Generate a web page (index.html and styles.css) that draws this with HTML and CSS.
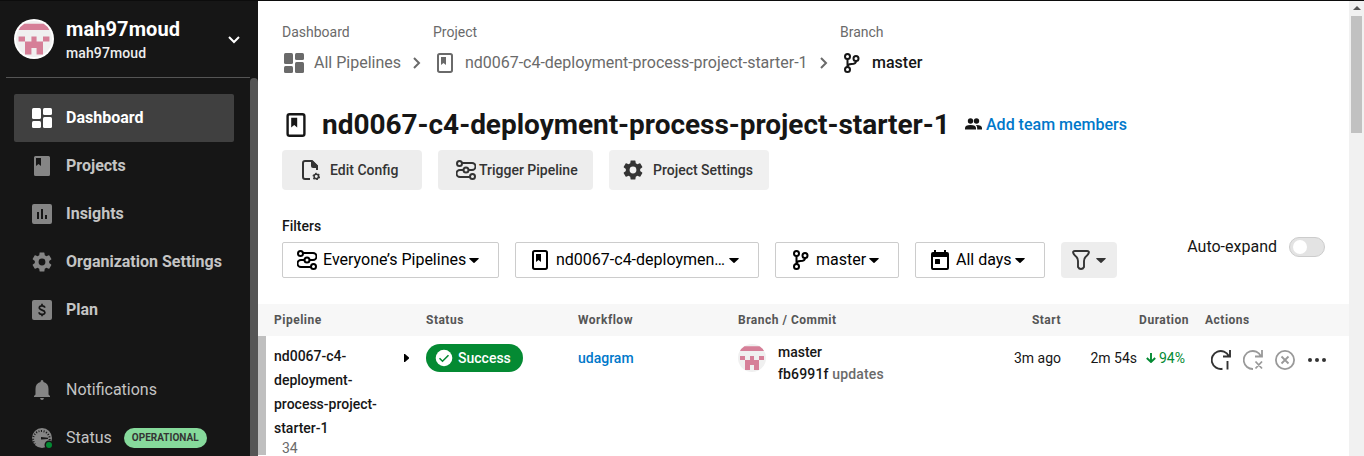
FILE: index.html
```html
<!DOCTYPE html>
<html lang="en">
<head>
<meta charset="utf-8">
<title>Pipelines</title>
<link rel="stylesheet" href="styles.css">
</head>
<body>
<svg class="sprite" aria-hidden="true">
  <symbol id="dash" viewBox="0 0 20 20"><rect width="9" height="11" rx="1.5"/><rect y="13" width="9" height="7" rx="1.5"/><rect x="11" width="9" height="7" rx="1.5"/><rect x="11" y="9" width="9" height="11" rx="1.5"/></symbol>
  <symbol id="book" viewBox="0 0 16 20"><rect x="1" y="1" width="14" height="18" rx="1.7" fill="none" stroke="currentColor" stroke-width="2"/><path d="M4 4h5v8l-2.500-2L4 12z"/></symbol>
  <symbol id="gear" viewBox="2 2 20 20"><path d="M19.140 12.940c.04-.3.060-.61.060-.94s-.02-.64-.07-.94l2.030-1.580a.49.490 0 0 0 .12-.61l-1.920-3.320a.488.488 0 0 0-.59-.22l-2.390.96c-.5-.38-1.030-.7-1.620-.94l-.36-2.540a.484.484 0 0 0-.48-.41h-3.840c-.24 0-.43.170-.47.410l-.36 2.540c-.59.240-1.130.57-1.620.94l-2.390-.96c-.22-.08-.47 0-.59.220L2.740 8.870c-.12.210-.08.470.12.610l2.030 1.580c-.05.300-.09.630-.09.940s.02.640.07.940l-2.030 1.580a.49.490 0 0 0-.12.610l1.920 3.320c.12.220.37.290.59.220l2.390-.96c.5.380 1.030.7 1.620.94l.36 2.540c.05.240.24.410.48.410h3.840c.24 0 .44-.17.470-.41l.36-2.540c.59-.24 1.130-.56 1.620-.94l2.390.96c.22.080.47 0 .59-.22l1.920-3.320c.12-.22.070-.47-.12-.61l-2.010-1.580zM12 15.400A3.400 3.400 0 1 1 12 8.600a3.400 3.400 0 0 1 0 6.800z"/></symbol>
  <symbol id="branch" viewBox="0 0 16 20"><g fill="none" stroke="currentColor" stroke-width="2"><circle cx="3.500" cy="3.500" r="2.500"/><circle cx="3.500" cy="16.500" r="2.500"/><circle cx="12" cy="5.500" r="2.500"/><path d="M3.500 6v8M12 8c0 2.500-2 3-4.500 3S3.500 12 3.500 14"/></g></symbol>
  <symbol id="pipe" viewBox="0 0 20 20"><g fill="none" stroke="currentColor" stroke-width="2"><circle cx="3.500" cy="3.500" r="2.500"/><circle cx="10" cy="10" r="2.500"/><circle cx="16.500" cy="16.500" r="2.500"/><path d="M6 3h10a3.500 3.500 0 0 1 0 7h-3.500M7.500 10H4a3.500 3.500 0 0 0 0 7h10"/></g></symbol>
  <symbol id="caret" viewBox="0 0 10 5"><path d="M.5 0h9Q10 .4 9.500 1L5.500 4.800Q5 5.200 4.500 4.800L.5 1Q0 .4.500 0z"/></symbol>
  <symbol id="chev" viewBox="0 0 8 12"><path d="M1 1l5 5-5 5" fill="none" stroke="currentColor" stroke-width="2"/></symbol>
  <symbol id="avatar" viewBox="0 0 28 28"><circle cx="14" cy="14" r="14" fill="#f0f0f0"/><path fill="#d67f98" d="M6.500 2.200h15Q25 4.500 26 7H2q1-2.500 4.500-4.800zM2 12h5v4H2zm19 0h5v4h-5zm-9 0h4v4h5v10h-5v-5h-4v5H7V16h5z"/></symbol>
</svg>
<div class="app">
  <aside class="side">
    <header class="org">
      <span class="face"><svg><use href="#avatar"/></svg></span>
      <div class="names"><b>mah97moud</b><span>mah97moud</span></div>
      <svg class="down" viewBox="0 0 12 8"><path d="M1 1l5 5 5-5" fill="none" stroke="#fff" stroke-width="2"/></svg>
    </header>
    <div class="navwrap">
      <nav class="nav">
        <a class="item active"><svg class="i20"><use href="#dash"/></svg><span class="label">Dashboard</span></a>
        <a class="item"><svg class="i20" viewBox="0 0 20 20"><path fill-rule="evenodd" d="M3.500 0h13Q18 0 18 1.500v17q0 1.500-1.500 1.500h-13Q2 20 2 18.500v-17Q2 0 3.500 0zM4 2v8l2.500-2L9 10V2z"/></svg><span class="label">Projects</span></a>
        <a class="item"><svg class="i20" viewBox="0 0 20 20"><path fill-rule="evenodd" d="M2 0h16q2 0 2 2v16q0 2-2 2H2q-2 0-2-2V2q0-2 2-2zM5 8v7h2V8zm4-3v10h2V5zm4 6v4h2v-4z"/></svg><span class="label">Insights</span></a>
        <a class="item"><svg class="i20"><use href="#gear"/></svg><span class="label">Organization Settings</span></a>
        <a class="item"><svg class="i20" viewBox="0 0 20 20"><rect width="20" height="20" rx="2"/><path d="M12.700 7.800C12.700 5.200 7.300 5.200 7.300 7.700c0 2.800 5.600 2 5.600 4.700s-5.800 2.600-5.800-.2M10 3.800v2.200m0 8v2.200" stroke="#161616" stroke-width="1.700" fill="none"/></svg><span class="label">Plan</span></a>
      </nav>
      <nav class="nav low">
        <a class="item light"><svg class="i20" viewBox="0 0 20 20"><path d="M10 0q1.500 0 1.500 2C15 3 16.500 5.500 16.500 9v5.500L18 16v1H2v-1l1.500-1.500V9C3.500 5.500 5 3 8.500 2Q8.500 0 10 0zM8 18h4q-.3 2-2 2t-2-2z"/></svg><span class="label">Notifications</span></a>
        <a class="item light"><svg class="i20" viewBox="0 0 20 20"><circle cx="10" cy="10" r="10"/><path d="M3 16.500A8.300 8.300 0 1 1 17.500 13" fill="none" stroke="#161616" stroke-width="2" stroke-dasharray="1 1.600"/><path d="M9 9l7 .7v1.300L9 11.500z" fill="#161616"/><circle cx="17" cy="17" r="4.500" fill="#161616"/><circle cx="17" cy="17" r="3" fill="#048a33"/></svg><span class="label">Status</span><span class="pill">OPERATIONAL</span></a>
      </nav>
      <div class="track"></div>
    </div>
  </aside>
  <main class="main">
    <div class="crumbs">
      <div class="crumb c1"><small>Dashboard</small><div class="line"><svg class="i20"><use href="#dash"/></svg><span>All Pipelines</span><svg class="chev"><use href="#chev"/></svg></div></div>
      <div class="crumb c2"><small>Project</small><div class="line"><svg class="book"><use href="#book"/></svg><span>nd0067-c4-deployment-process-project-starter-1</span><svg class="chev"><use href="#chev"/></svg></div></div>
      <div class="crumb c3"><small>Branch</small><div class="line"><svg class="book"><use href="#branch"/></svg><span>master</span></div></div>
    </div>
    <div class="title"><svg class="bigbook"><use href="#book"/></svg><h1>nd0067-c4-deployment-process-project-starter-1</h1>
      <a class="team"><svg viewBox="0 0 17 12"><circle cx="5.500" cy="3" r="2.700"/><circle cx="11.500" cy="3" r="2.700"/><path d="M0 11.500V10q0-3 5.500-3T11 10v1.500zM12.200 11.500V10q0-1.700-1.400-2.900Q17 7 17 10v1.500z"/></svg><span>Add team members</span></a></div>
    <div class="buttons">
      <button class="btn b1"><svg class="i20" viewBox="0 0 20 20"><path d="M10 19H5q-2 0-2-2V3q0-2 2-2h7l5 5v4" fill="none" stroke="currentColor" stroke-width="2"/><path d="M11 1h2l5 5v2h-5q-2 0-2-2z"/><circle cx="16.300" cy="16.500" r="2.200" fill="none" stroke="currentColor" stroke-width="1.500"/><circle cx="16.300" cy="16.500" r="3.200" fill="none" stroke="currentColor" stroke-width="1.200" stroke-dasharray="1.650 1.700"/></svg><span>Edit Config</span></button>
      <button class="btn b2"><svg class="i20"><use href="#pipe"/></svg><span>Trigger Pipeline</span></button>
      <button class="btn b3"><svg class="i20"><use href="#gear"/></svg><span>Project Settings</span></button>
    </div>
    <div class="filterbar">
      <div class="filters"><label>Filters</label>
        <div class="selects">
          <div class="sel s1"><svg class="i20"><use href="#pipe"/></svg><span>Everyone’s Pipelines</span><svg class="caret"><use href="#caret"/></svg></div>
          <div class="sel s2"><svg class="book"><use href="#book"/></svg><span>nd0067-c4-deploymen…</span><svg class="caret"><use href="#caret"/></svg></div>
          <div class="sel s3"><svg class="book"><use href="#branch"/></svg><span>master</span><svg class="caret"><use href="#caret"/></svg></div>
          <div class="sel s4"><svg class="cal" viewBox="0 0 18 20"><path fill-rule="evenodd" d="M3 0h2v2h8V0h2v2h1q2 0 2 2v14q0 2-2 2H2q-2 0-2-2V4q0-2 2-2h1zM2 7v11h14V7z"/><rect x="4" y="9" width="5" height="5" rx=".6"/></svg><span>All days</span><svg class="caret"><use href="#caret"/></svg></div>
          <div class="sel funnel"><svg class="fun" viewBox="0 0 18 20"><path d="M3 1h12q2.500 0 1.700 2.200Q16 5 13.500 7 12 8.500 12 11v6q-1 2-3 2t-3-2v-6q0-2.500-1.500-4Q2 5 1.300 3.200.500 1 3 1z" fill="none" stroke="currentColor" stroke-width="1.900"/></svg><svg class="caret"><use href="#caret"/></svg></div>
        </div>
      </div>
      <div class="auto"><span>Auto-expand</span><i class="toggle"></i></div>
    </div>
    <div class="row head"><span>Pipeline</span><span>Status</span><span>Workflow</span><span>Branch / Commit</span><span class="r">Start</span><span class="r">Duration</span><span class="act">Actions</span></div>
    <div class="row data">
      <div class="pipeline"><b>nd0067-c4-<br>deployment-<br>process-project-<br>starter-1</b><span>34</span><svg class="tri" viewBox="0 0 5 8"><path d="M0 0h1l4 3.500v1L1 8H0z"/></svg></div>
      <div><span class="success"><svg viewBox="0 0 16 16"><circle cx="8" cy="8" r="8.300" fill="#fff"/><path d="M3.500 8.200l3 3 6-6" fill="none" stroke="#048a33" stroke-width="1.600"/></svg>Success</span></div>
      <div class="work">udagram</div>
      <div class="commit"><svg><use href="#avatar"/></svg><div><b>master</b><p><b>fb6991f</b> updates</p></div></div>
      <div class="r cell">3m ago</div>
      <div class="dur cell"><span>2m 54s</span><svg viewBox="0 0 10 10"><path d="M5 0v9M.8 5L5 9l4.200-4" fill="none" stroke="#048a33" stroke-width="1.900"/></svg><em>94%</em></div>
      <div class="act icons">
        <svg class="i20 outline" viewBox="0 0 20 20"><path d="M11.500 18.800A9 9 0 1 1 17.800 6M19 0v6.500h-7M16.500 11v8.500"/></svg>
        <svg class="i20 outline muted" viewBox="0 0 20 20"><path d="M10 19A9 9 0 1 1 17.800 6M19 0v6.500h-7M12.500 11.500l6.500 7m0-7l-6.500 7"/></svg>
        <svg class="i20 outline muted" viewBox="0 0 20 20"><circle cx="10" cy="10" r="9.100"/><path d="M6.500 6.500l7 7m0-7l-7 7"/></svg>
        <svg class="dots" viewBox="0 0 18 4"><circle cx="2" cy="2" r="2"/><circle cx="9" cy="2" r="2"/><circle cx="16" cy="2" r="2"/></svg>
      </div>
    </div>
  </main>
  <div class="scroll"><svg viewBox="0 0 8 4"><path d="M0 4l4-4 4 4z"/></svg><div class="thumb"></div></div>
</div>
</body>
</html>
```
FILE: styles.css
```css
* { box-sizing: border-box; }
body { margin: 0; font-family: Roboto, sans-serif; color: #161616; background: #fff; overflow: hidden; }
svg { display: block; flex: none; fill: currentColor; }
b { font-weight: 500; }
p { margin: 0; }
.sprite { width: 0; height: 0; display: none; }
.i20 { width: 20px; height: 20px; }
.book { width: 16px; height: 20px; }
.app { display: flex; width: 1364px; height: 456px; border-top: 1px solid #0c0c0c; overflow: hidden; }

.side { width: 258px; height: 455px; background: #161616; flex: none; overflow: hidden; }
.org { height: 77px; margin: 0 8px 0 6px; padding-left: 8px; border-bottom: 1px solid #555; display: flex; align-items: center; }
.face { width: 40px; height: 40px; border-radius: 50%; background: #fff; padding: 2px; }
.face svg { width: 36px; height: 36px; }
.names { margin-left: 12px; padding-top: 4px; width: 162px; color: #fff; display: flex; flex-direction: column; }
.names b { font-size: 20px; line-height: 24px; font-weight: 700; letter-spacing: .1px; }
.names span { font-size: 14px; line-height: 24px; font-weight: 500; color: #eee; letter-spacing: .1px; }
.down { width: 12px; height: 8px; margin-top: 2px; }
.navwrap { display: grid; grid-template-columns: 250px 8px; grid-template-rows: 288px 90px; }
.nav { padding: 16px 16px 0 14px; }
.low { grid-row: 2; grid-column: 1; padding-top: 0; }
.track { grid-column: 2; grid-row: 1 / 3; background: #555; border-radius: 4px 4px 0 0; }
.item { height: 48px; padding-left: 18px; display: flex; align-items: center; gap: 14px; font-size: 16px; font-weight: 700; color: #c4c4c4; border-radius: 2px; white-space: nowrap; }
.item > svg { color: #858585; }
.label { padding-bottom: 2px; }
.active, .active > svg { color: #fff; }
.active { background: #404040; }
.light { font-weight: 400; }
.pill { background: #86d99b; color: #343434; font-size: 10px; font-weight: 700; line-height: 20px; height: 20px; width: 83px; text-align: center; border-radius: 10px; margin-left: -2px; }

.main { width: 1091px; flex: none; }
.crumbs { display: flex; padding: 22px 0 0 24px; color: #6a6a6a; }
.crumb small { display: block; font-size: 14px; line-height: 18px; }
.line { display: flex; align-items: center; height: 24px; margin-top: 10px; font-size: 16px; white-space: nowrap; }
.line > svg:first-child { margin-left: 2px; }
.line span { margin-left: 10px; padding-bottom: 2px; }
.c1 { width: 151px; }
.c2 { width: 407px; }
.c2 .line > svg:first-child, .c3 .line > svg:first-child { margin-left: 4px; }
.c2 .line span { margin-left: 12px; letter-spacing: -.02px; }
.c3 .line span { margin-left: 12px; font-weight: 500; }
.c3 .line { color: #161616; }
.chev { width: 8px; height: 12px; margin-left: 12px; }
.title { display: flex; align-items: center; height: 36px; margin-top: 32px; padding-left: 28px; }
.bigbook { width: 20px; height: 24px; }
.title h1 { margin: 0 0 0 16px; width: 643px; font-size: 28px; line-height: 36px; font-weight: 700; letter-spacing: -.03px; white-space: nowrap; }
.team { display: flex; align-items: center; gap: 4px; font-weight: 500; font-size: 16px; padding-bottom: 2px; }
.team span { color: #0078ca; }
.team svg { width: 17px; height: 12px; }
.buttons { display: flex; gap: 16px; padding: 7px 0 0 24px; }
.btn { font: 500 14px Roboto, sans-serif; color: #343434; border: 0; background: #ededed; border-radius: 4px; height: 40px; padding: 0; display: flex; align-items: center; white-space: nowrap; }
.b1 { width: 140px; padding-left: 18px; gap: 10px; }
.b2 { width: 155px; padding-left: 18px; gap: 3px; }
.b3 { width: 160px; padding-left: 14px; gap: 10px; background: #f0f0f0; }
.filterbar { display: flex; justify-content: space-between; padding: 26px 24px 0; height: 114px; }
.filters label { display: block; font-size: 14px; line-height: 20px; font-weight: 500; }
.selects { display: flex; gap: 16px; margin-top: 6px; }
.sel { height: 36px; border: 1px solid #ccc; border-radius: 2px; display: flex; align-items: center; font-size: 16px; color: #000; white-space: nowrap; }
.sel span { padding-bottom: 2px; }
.sel .caret { margin-left: 4px; }
.caret { width: 10px; height: 5px; }
.cal { width: 18px; height: 20px; }
.fun { width: 18px; height: 20px; }
.s1 { width: 217px; padding-left: 14px; }
.s1 span { margin-left: 6px; }
.s1 .caret, .s3 .caret, .s4 .caret { margin-left: 3px; }
.s2 { width: 244px; padding-left: 16px; }
.s2 span { margin-left: 8px; }
.s3 { width: 124px; padding-left: 17px; }
.s3 span { margin-left: 7px; }
.s4 { width: 130px; padding-left: 15px; }
.s4 span { margin-left: 7px; }
.funnel { width: 56px; padding-left: 11px; border: 0; border-radius: 4px; background: #ededed; color: #343434; }
.funnel .caret { margin-left: 6px; }
.auto { display: flex; align-items: center; height: 24px; margin-top: 19px; gap: 12px; font-size: 16px; }
.auto span { padding-bottom: 1px; }
.toggle { width: 36px; height: 20px; border: 1px solid #ccc; border-radius: 10px; background: #e3e3e3; padding: 2px 3px; }
.toggle::before { content: ""; display: block; width: 14px; height: 14px; border-radius: 50%; background: #fff; }

.row { display: grid; grid-template-columns: 152px 152px 160px 210px 113px 128px 1fr; padding-left: 16px; }
.head { height: 32px; background: #f7f7f7; font-size: 12px; line-height: 32px; font-weight: 700; letter-spacing: .5px; color: #555; }
.r { text-align: right; }
.act { padding-left: 16px; }
.data { height: 119px; border-left: 8px solid #bfbfbf; padding-left: 8px; font-size: 14px; }
.pipeline { display: grid; grid-template-columns: 130px 1fr; padding-top: 8px; line-height: 24px; align-content: start; }
.pipeline span { grid-row: 2; padding-left: 8px; line-height: 16px; font-size: 14px; color: #6a6a6a; }
.tri { width: 5px; height: 8px; grid-column: 2; grid-row: 1; margin-top: 10px; color: #000; }
.success { display: inline-flex; align-items: center; gap: 6px; height: 28px; width: 97px; border-radius: 14px; background: #048a33; color: #fff; font-weight: 500; padding-left: 10px; margin-top: 8px; }
.success svg { width: 16px; height: 16px; overflow: visible; }
.work { color: #0078ca; font-weight: 500; line-height: 44px; }
.commit { display: flex; gap: 12px; padding-top: 8px; }
.commit > svg { width: 28px; height: 28px; }
.commit div { line-height: 22px; margin-top: -3px; }
.commit p { color: #6a6a6a; font-weight: 500; letter-spacing: .15px; }
.commit p b { color: #161616; }
.cell { line-height: 44px; height: 44px; }
.dur { display: flex; justify-content: flex-end; align-items: center; padding-right: 4px; }
.dur svg { width: 10px; height: 10px; margin: 0 3px 0 8px; }
.dur span { margin-right: 1px; }
.dur em { font-style: normal; color: #048a33; }
.icons { display: flex; align-items: center; gap: 12px; height: 48px; padding-left: 22px; }
.outline { fill: none; stroke: #333; stroke-width: 1.9; }
.muted { stroke: #999; stroke-width: 1.8; }
.dots { width: 18px; height: 4px; margin-left: 1px; color: #333; }
.scroll { width: 15px; background: #f1f1f1; display: flex; flex-direction: column; align-items: center; padding-top: 5px; }
.scroll svg { width: 8px; height: 4px; color: #555; }
.thumb { width: 11px; height: 117px; margin-top: 6px; background: #c1c1c1; }
```
